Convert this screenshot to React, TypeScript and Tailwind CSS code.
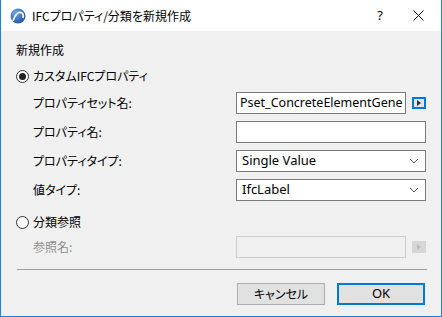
const jp = "font-['Meiryo_UI','Noto_Sans_CJK_JP',sans-serif] [font-feature-settings:'palt']";

function Logo() {
  return (
    <svg width="16" height="16" viewBox="0 0 16 16">
      <defs>
        <radialGradient id="lg" cx="0.35" cy="0.3" r="0.8">
          <stop offset="0" stopColor="#6fa6e8" />
          <stop offset="1" stopColor="#1c4f9e" />
        </radialGradient>
      </defs>
      <circle cx="8" cy="8" r="7.5" fill="url(#lg)" />
      <path d="M3 13 C5 6 9 3 12 5 C13.5 6 13.5 8 13 10" fill="none" stroke="#fff" strokeWidth="1.6" />
    </svg>
  );
}

function Radio({ checked }: { checked?: boolean }) {
  return (
    <span className="w-[13px] h-[13px] rounded-full border border-[#333] bg-white flex items-center justify-center">
      {checked && <span className="w-[7px] h-[7px] rounded-full bg-[#222]" />}
    </span>
  );
}

function Chevron() {
  return (
    <svg width="10" height="6" viewBox="0 0 10 6">
      <path d="M1 1 L5 5 L9 1" fill="none" stroke="#555" strokeWidth="1" />
    </svg>
  );
}

function ArrowBtn({ disabled }: { disabled?: boolean }) {
  return (
    <span
      className={
        disabled
          ? "w-[14px] h-[12px] bg-[#d6d6d6] flex items-center justify-center"
          : "w-[14px] h-[12px] border-2 border-[#0078d7] bg-[#e5e5e5] flex items-center justify-center"
      }
    >
      <svg width="4" height="6" viewBox="0 0 4 6">
        <path d="M0 0 L4 3 L0 6 Z" fill={disabled ? "#bcbcbc" : "#333"} />
      </svg>
    </span>
  );
}

function Row({ label, children, disabled }: { label: string; children: React.ReactNode; disabled?: boolean }) {
  return (
    <div className="flex items-center h-[22px]">
      <span className={`${jp} text-[12px] ml-[17px] w-[203px] ${disabled ? "text-[#8d8d8d]" : "text-black"}`}>{label}</span>
      {children}
    </div>
  );
}

export default function App() {
  const latin = "font-['Segoe_UI','Noto_Sans',sans-serif] text-[13px]";
  return (
    <div className="w-[442px] h-[317px] flex flex-col border-x border-b border-[#1883d7] bg-[#f0f0f0] overflow-hidden">
      <div className="h-[31px] bg-white flex items-center shrink-0">
        <span className="ml-[9px] mr-[6px] flex"><Logo /></span>
        <span className={`${jp} text-[12px] text-black`}>IFCプロパティ/分類を新規作成</span>
        <span className="ml-auto mr-[30px] font-['Segoe_UI','Noto_Sans',sans-serif] text-[13px] text-black">?</span>
        <svg className="mr-[17px]" width="11" height="11" viewBox="0 0 11 11">
          <path d="M0.5 0.5 L10.5 10.5 M10.5 0.5 L0.5 10.5" stroke="#111" strokeWidth="1" />
        </svg>
      </div>

      <div className="flex flex-col pl-[15px] pr-[15px]">
        <div className={`${jp} text-[12px] text-black mt-[9px] h-[20px] flex items-center`}>新規作成</div>

        <div className="flex items-center h-[20px] mt-[6px] gap-[4px]">
          <Radio checked />
          <span className={`${jp} text-[12px] text-black`}>カスタムIFCプロパティ</span>
        </div>

        <div className="flex flex-col gap-[7px] mt-[6px]">
          <Row label="プロパティセット名:">
            <div className="w-[170px] h-[22px] border border-[#7a7a7a] bg-white pl-[3px] flex items-center overflow-hidden whitespace-nowrap font-['Segoe_UI','Noto_Sans',sans-serif] text-[12.5px]">
              Pset_ConcreteElementGene
            </div>
            <span className="ml-[6px]"><ArrowBtn /></span>
          </Row>
          <Row label="プロパティ名:">
            <div className="w-[190px] h-[22px] border border-[#7a7a7a] bg-white" />
          </Row>
          <Row label="プロパティタイプ:">
            <div className={`w-[190px] h-[22px] border border-[#7a7a7a] bg-white pl-[5px] pr-[6px] flex items-center justify-between ${latin}`}>
              <span>Single Value</span>
              <Chevron />
            </div>
          </Row>
          <Row label="値タイプ:">
            <div className={`w-[190px] h-[22px] border border-[#7a7a7a] bg-white pl-[5px] pr-[6px] flex items-center justify-between ${latin}`}>
              <span>IfcLabel</span>
              <Chevron />
            </div>
          </Row>
        </div>

        <div className="flex items-center h-[20px] mt-[11px] gap-[4px]">
          <Radio />
          <span className={`${jp} text-[12px] text-black`}>分類参照</span>
        </div>

        <div className="mt-[4px]">
          <Row label="参照名:" disabled>
            <div className="w-[170px] h-[22px] border border-[#cccccc] bg-[#f0f0f0]" />
            <span className="ml-[6px]"><ArrowBtn disabled /></span>
          </Row>
        </div>

        <div className="mt-[11px] h-px bg-[#a0a0a0] w-[410px] ml-px" />

        <div className="flex justify-end gap-[12px] mt-[13px] pr-px">
          <button className={`${jp} w-[88px] h-[22px] bg-[#e1e1e1] border border-[#adadad] text-[12px] text-black flex items-center justify-center`}>
            キャンセル
          </button>
          <button className={`${latin} w-[88px] h-[22px] bg-[#e1e1e1] border-2 border-[#0078d7] text-black flex items-center justify-center`}>
            OK
          </button>
        </div>
      </div>
    </div>
  );
}
